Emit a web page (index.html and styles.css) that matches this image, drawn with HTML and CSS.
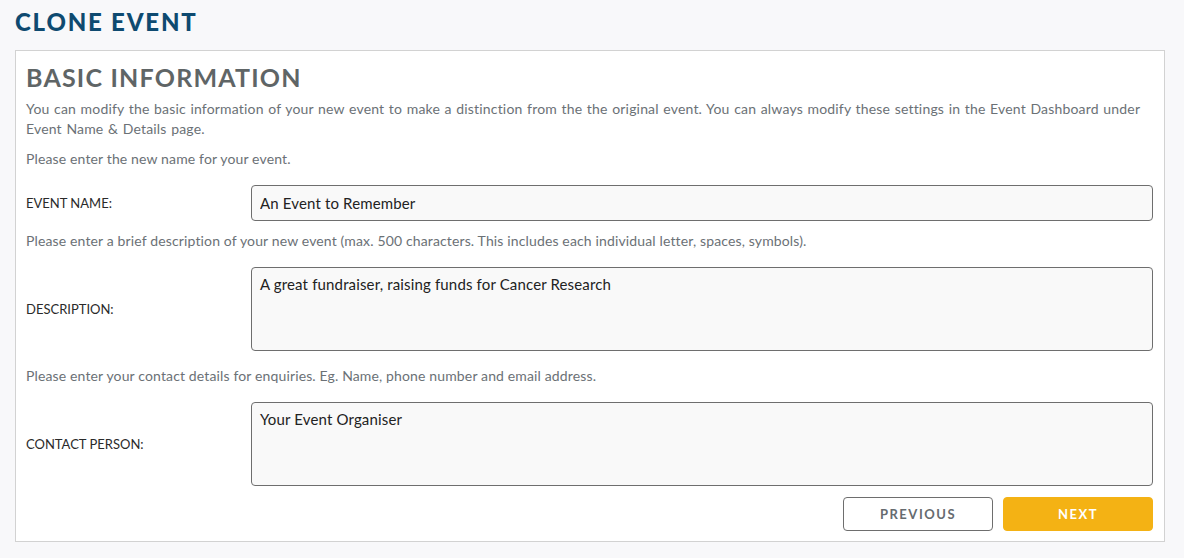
FILE: index.html
```html
<!DOCTYPE html>
<html lang="en">

<head>
    <meta charset="UTF-8">
    <meta name="viewport" content="width=device-width, initial-scale=1.0">
    <title>Clone Event</title>
    <link rel="stylesheet" href="styles.css">
</head>

<body>
    <h1>Clone Event</h1>
    <form class="panel" id="cloneForm">
        <h2>Basic Information</h2>
        <p class="intro">You can modify the basic information of your new event to make a distinction from the the original event. You can always modify these settings in the Event Dashboard under Event Name &amp; Details page.</p>
        <p>Please enter the new name for your event.</p>
        <div class="row">
            <label for="eventName">EVENT NAME:</label>
            <input type="text" id="eventName" value="An Event to Remember">
        </div>
        <p>Please enter a brief description of your new event (max. 500 characters. This includes each individual letter, spaces, symbols).</p>
        <div class="row row-wide">
            <label for="eventDesc">DESCRIPTION:</label>
            <textarea id="eventDesc">A great fundraiser, raising funds for Cancer Research</textarea>
        </div>
        <p>Please enter your contact details for enquiries. Eg. Name, phone number and email address.</p>
        <div class="row">
            <label for="contactPerson">CONTACT PERSON:</label>
            <textarea id="contactPerson">Your Event Organiser</textarea>
        </div>
        <div class="btns">
            <button type="button" class="btn-prev">PREVIOUS</button>
            <button type="submit" class="btn-next">NEXT</button>
        </div>
    </form>
</body>

</html>
```

FILE: styles.css
```css
body {
    font-family: Lato, "Open Sans", sans-serif;
    margin: 0;
    padding: 7px 19px 0 15px;
    background-color: #f8f8fa;
}

h1 {
    margin: 0 0 13px;
    font-size: 24px;
    line-height: 30px;
    font-weight: 900;
    letter-spacing: 1.8px;
    text-transform: uppercase;
    color: #0e4a70;
}

.panel {
    padding: 10px 11px 10px 10px;
    background-color: #ffffff;
    border: 1px solid #d2d2d2;
}

h2 {
    margin: 0 0 6px;
    font-size: 25px;
    line-height: 32px;
    font-weight: 700;
    letter-spacing: 1.2px;
    text-transform: uppercase;
    color: #5f6566;
}

p {
    margin: 0 0 16px;
    font-size: 14px;
    line-height: 20px;
    letter-spacing: 0.14px;
    color: #6b7176;
}

p.intro {
    margin-bottom: 10px;
    letter-spacing: 0.18px;
    word-spacing: 0.8px;
}

.row {
    display: flex;
    align-items: center;
    margin-bottom: 10px;
}

.row-wide {
    margin-bottom: 15px;
}

label {
    flex: 0 0 225px;
    font-size: 13px;
    color: #2a2a2a;
}

input,
textarea {
    flex: 1;
    box-sizing: border-box;
    margin: 0;
    padding: 6px 8px;
    font-family: inherit;
    font-size: 15px;
    line-height: 20px;
    letter-spacing: 0.15px;
    color: #222222;
    background-color: #f9f9f9;
    border: 1px solid #6e6e6e;
    border-radius: 4px;
}

input {
    height: 36px;
}

textarea {
    height: 84px;
    resize: none;
}

.btns {
    display: flex;
    justify-content: flex-end;
    gap: 10px;
    margin-top: 11px;
}

button {
    width: 150px;
    height: 34px;
    font-family: inherit;
    font-size: 13px;
    font-weight: 700;
    letter-spacing: 1.5px;
    border-radius: 4px;
    cursor: pointer;
}

.btn-prev {
    background-color: #ffffff;
    color: #666b6f;
    border: 1px solid #6e6e6e;
}

.btn-next {
    background-color: #f4b214;
    color: #ffffff;
    border: 1px solid #f4b214;
}
```
